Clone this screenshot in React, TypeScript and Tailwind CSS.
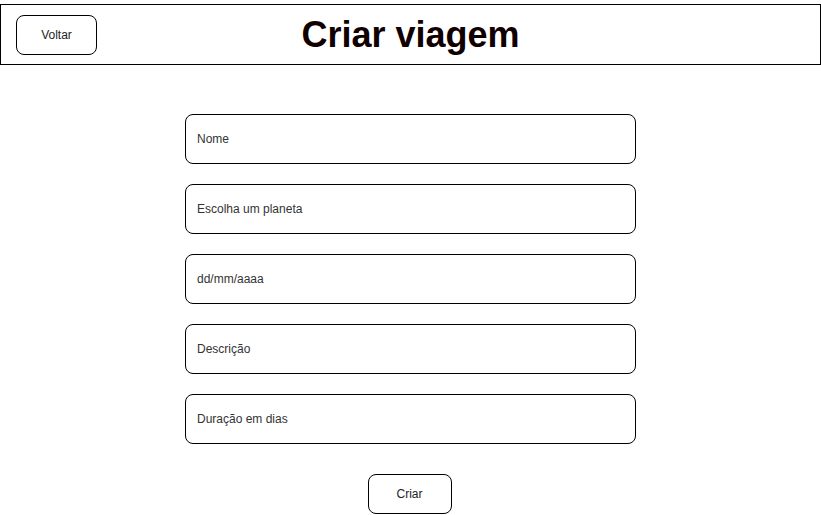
const fields = ["Nome", "Escolha um planeta", "dd/mm/aaaa", "Descrição", "Duração em dias"];

export default function App() {
  return (
    <div className="min-h-screen bg-white font-['Liberation_Sans',Arial,sans-serif] text-[#222]">
      <header className="mt-1 grid h-[61px] grid-cols-[1fr_auto_1fr] items-center border border-black">
        <div className="pl-[15px]">
          <button className="h-10 w-[81px] rounded-lg border border-black text-xs">Voltar</button>
        </div>
        <h1 className="text-4xl font-bold text-[#110000]">Criar viagem</h1>
        <div />
      </header>

      <form className="mt-[49px] flex flex-col items-center gap-5">
        {fields.map((f) => (
          <input
            key={f}
            placeholder={f}
            className="h-[50px] w-[451px] rounded-lg border border-black px-[11px] text-xs outline-none placeholder:text-[#333]"
          />
        ))}
        <button type="button" className="mt-[10px] mr-[2px] h-10 w-[84px] rounded-lg border border-black text-xs">
          Criar
        </button>
      </form>
    </div>
  );
}
